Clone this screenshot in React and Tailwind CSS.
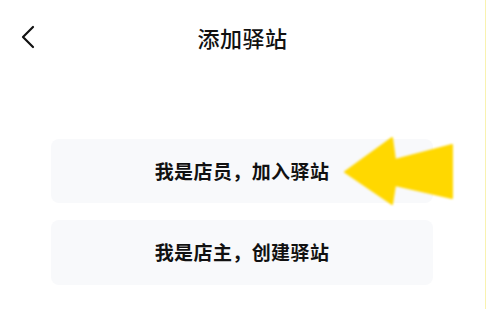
import React from 'react';

const font = { fontFamily: '"Noto Sans CJK SC", "Noto Sans", sans-serif' };

function BackIcon() {
  return (
    <svg width="14" height="24" viewBox="0 0 14 24" fill="none">
      <path d="M12 2 L2 12 L12 22" stroke="#111" strokeWidth="2.2" strokeLinecap="round" strokeLinejoin="round" />
    </svg>
  );
}

function Pointer() {
  return (
    <svg width="120" height="80" viewBox="0 0 120 80" className="absolute left-[340px] top-[133px]">
      <defs>
        <filter id="soft" x="-10%" y="-10%" width="120%" height="120%">
          <feGaussianBlur stdDeviation="0.8" />
        </filter>
      </defs>
      <polygon
        points="5,39 52,5 55,27 112,12 112,65 55,52 52,71"
        fill="#FFD800"
        stroke="#FFD800"
        strokeWidth="2"
        strokeLinejoin="round"
        filter="url(#soft)"
      />
    </svg>
  );
}

export default function App() {
  return (
    <div className="relative w-[486px] h-[309px] overflow-hidden bg-white border-r border-[#f9f2b0]" style={font}>
      <div className="grid grid-cols-[1fr_auto_1fr] items-center h-[74px]">
        <div className="pl-[21px] flex items-center">
          <BackIcon />
        </div>
        <h1 className="text-[22px] font-medium text-[#111] tracking-[0.5px]">添加驿站</h1>
        <div />
      </div>

      <div className="flex flex-col gap-[17px] mt-[65px] ml-[51px] w-[382px]">
        <div className="h-[64px] rounded-[8px] bg-[#f8f9fb] flex items-center justify-center">
          <span className="text-[19px] font-bold text-[#111] tracking-[0.4px]">我是店员，加入驿站</span>
        </div>
        <div className="h-[65px] rounded-[8px] bg-[#f8f9fb] flex items-center justify-center">
          <span className="text-[19px] font-bold text-[#111] tracking-[0.4px]">我是店主，创建驿站</span>
        </div>
      </div>

      <Pointer />
    </div>
  );
}
